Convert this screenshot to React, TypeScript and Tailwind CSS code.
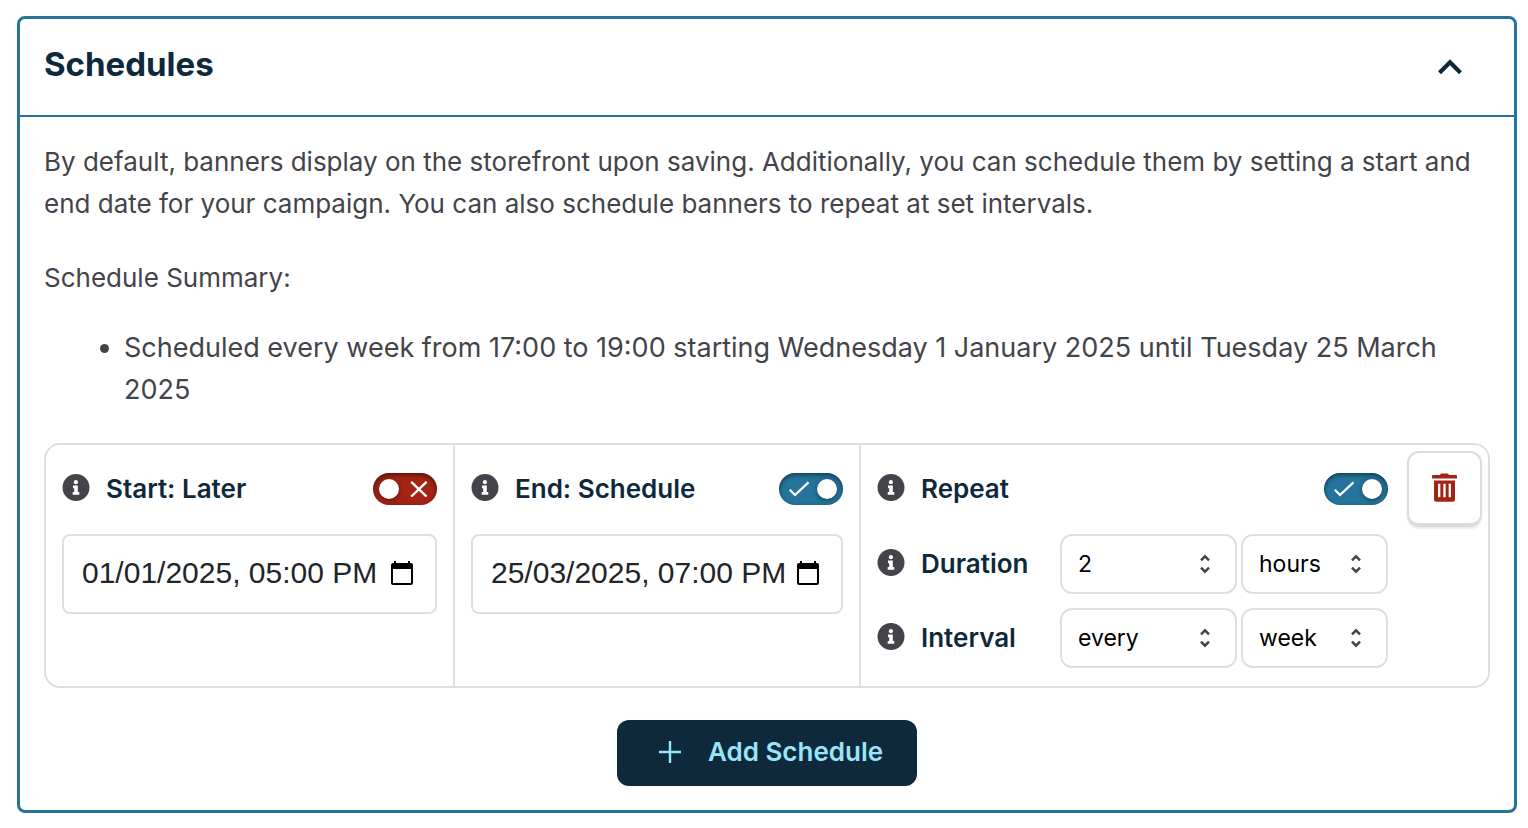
import * as React from "react";
import clsx from "clsx";

const LABEL = "text-[26px] leading-8 font-semibold text-[#0d293b]";

function InfoIcon() {
  return (
    <svg viewBox="0 0 28 28" className="mb-0.5 h-7 w-7 shrink-0" aria-hidden>
      <circle cx="14" cy="13.5" r="13.5" fill="#43444a" />
      <circle cx="13.9" cy="8.2" r="2.1" fill="#fff" />
      <path d="M11 11.4h4.800v6.600h1.500v2.800h-6.600v-2.800h1.500v-3.800H11z" fill="#fff" />
    </svg>
  );
}

function CalendarIcon() {
  return (
    <svg viewBox="0 0 22 24" className="h-6 w-[22px] shrink-0" aria-hidden>
      <path
        d="M20 2h-1V0h-2v2H5V0H3v2H2C.9 2 0 2.900 0 4v18c0 1.100.9 2 2 2h18c1.100 0 2-.9 2-2V4c0-1.100-.9-2-2-2zm0 20H2V8h18z"
        fill="#000"
      />
    </svg>
  );
}

function TrashIcon() {
  return (
    <svg viewBox="0 0 25 29" className="mb-0.5 h-[29px] w-[25px]" aria-hidden>
      <path d="M1 2h7L9 .5h7L17 2h7a1 1 0 0 1 1 1v2.500H0V3a1 1 0 0 1 1-1z" fill="#a32315" />
      <path d="M2 7.500h21v19a2.300 2.300 0 0 1-2.300 2.300H4.300A2.300 2.300 0 0 1 2 26.500z" fill="#a32315" />
      <path d="M7.200 10.800v13.400M12.500 10.800v13.400M17.800 10.800v13.400" stroke="#fff" strokeWidth="2.300" />
    </svg>
  );
}

function Toggle({ label, checked, onChange }: { label: string; checked: boolean; onChange: (v: boolean) => void }) {
  return (
    <label className="relative ml-auto block h-8 w-16 shrink-0 cursor-pointer">
      <input
        type="checkbox"
        aria-label={label}
        checked={checked}
        onChange={(e) => onChange(e.target.checked)}
        className="block h-8 w-16 cursor-pointer appearance-none rounded-full bg-[#a32315] shadow-[inset_0_2px_4px_rgba(0,0,0,0.5)] checked:bg-[#24749b]"
      />
      <span
        className={clsx(
          "pointer-events-none absolute top-[6px] h-5 w-5 rounded-full bg-white shadow-[0_1px_4px_rgba(0,0,0,0.5)]",
          checked ? "right-[6px]" : "left-[6px]",
        )}
      />
      <svg
        viewBox="0 0 20 16"
        className={clsx("pointer-events-none absolute top-2 h-4 w-5", checked ? "left-[10px]" : "right-2")}
        fill="none"
        stroke="#fff"
        strokeWidth="2.300"
        aria-hidden
      >
        {checked ? <path d="M.8 8.700l5.200 5.300L19.500 1.300" /> : <path d="M2.200.8l15.400 14.800M17.600.8L2.200 15.600" />}
      </svg>
    </label>
  );
}

function DateField({ id, value, onChange }: { id: string; value: string; onChange: (v: string) => void }) {
  return (
    <div className="flex h-20 items-center rounded-lg border-2 border-[#dce0e5] pr-[22px] pb-0.5 pl-[18px]">
      <input
        id={id}
        type="text"
        value={value}
        onChange={(e) => onChange(e.target.value)}
        className='min-w-0 flex-1 bg-transparent font-["Liberation_Sans",Arial,sans-serif] text-[30px] text-[#212529] outline-none'
      />
      <CalendarIcon />
    </div>
  );
}

function Select({ label, options, className }: { label: string; options: string[]; className: string }) {
  return (
    <div className={clsx("relative", className)}>
      <select
        aria-label={label}
        className="h-[60px] w-full appearance-none rounded-xl border-2 border-[#dce0e5] bg-white pr-10 pl-4 text-[23px] text-black"
      >
        {options.map((o) => (
          <option key={o}>{o}</option>
        ))}
      </select>
      <svg
        viewBox="0 0 10 20"
        className="pointer-events-none absolute top-5 right-[27px] h-5 w-[10px]"
        fill="none"
        stroke="#43444a"
        strokeWidth="2.500"
        aria-hidden
      >
        <path d="M1 6.300l4-4 4 4M1 13.700l4 4 4-4" />
      </svg>
    </div>
  );
}

export default function App() {
  const [open, setOpen] = React.useState(true);
  const [start, setStart] = React.useState("01/01/2025, 05:00 PM");
  const [end, setEnd] = React.useState("25/03/2025, 07:00 PM");
  const [startOn, setStartOn] = React.useState(false);
  const [endOn, setEndOn] = React.useState(true);
  const [repeatOn, setRepeatOn] = React.useState(true);

  return (
    <main className='min-h-screen bg-white pt-4 pr-[11px] pb-4 pl-[17px] font-["Inter","Liberation_Sans",sans-serif]'>
      <section className="rounded-lg border-3 border-[#24749b]">
        <header className="flex h-[98px] items-center justify-between border-b-2 border-[#24749b] pr-[52px] pl-6">
          <h2 className="pb-[6px] text-[33px] leading-10 font-bold text-[#0d293b]">Schedules</h2>
          <button type="button" aria-label="Toggle schedules" aria-expanded={open} onClick={() => setOpen(!open)}>
            <svg viewBox="0 0 24 18" className="h-[18px] w-6" fill="none" stroke="#0d293b" strokeWidth="4.200" aria-hidden>
              <path d="M1.500 14.800L12 4.300l10.500 10.500" />
            </svg>
          </button>
        </header>

        {open && (
          <div className="p-6 text-[26px] leading-[42px] text-[#43444a]">
            <p>
              By default, banners display on the storefront upon saving. Additionally, you can schedule them by setting a
              start and end date for your campaign. You can also schedule banners to repeat at set intervals.
            </p>
            <p className="mt-8">Schedule Summary:</p>
            <ul className="mt-7 list-disc pl-20 text-[27px]">
              <li>
                Scheduled every week from 17:00 to 19:00 starting Wednesday 1 January 2025 until Tuesday 25 March 2025
              </li>
            </ul>

            <div className="mt-8 grid grid-cols-[minmax(0,409fr)_minmax(0,406fr)_minmax(0,627fr)] rounded-2xl border-2 border-[#dce0e5]">
              <div className="border-r-2 border-[#dce0e5] px-4 pt-7">
                <div className="mb-[29px] flex h-8 items-center gap-4">
                  <InfoIcon />
                  <label htmlFor="start" className={LABEL}>
                    Start: Later
                  </label>
                  <Toggle label="Start later" checked={startOn} onChange={setStartOn} />
                </div>
                <DateField id="start" value={start} onChange={setStart} />
              </div>

              <div className="border-r-2 border-[#dce0e5] px-4 pt-7">
                <div className="mb-[29px] flex h-8 items-center gap-4">
                  <InfoIcon />
                  <label htmlFor="end" className={LABEL}>
                    End: Schedule
                  </label>
                  <Toggle label="Schedule end" checked={endOn} onChange={setEndOn} />
                </div>
                <DateField id="end" value={end} onChange={setEnd} />
              </div>

              <div className="flex pr-[6px] pl-4">
                <div className="flex-1 pt-7 pb-[18px]">
                  <div className="mb-[29px] flex h-8 items-center gap-4">
                    <InfoIcon />
                    <span className={LABEL}>Repeat</span>
                    <Toggle label="Repeat" checked={repeatOn} onChange={setRepeatOn} />
                  </div>
                  <div className="flex items-center">
                    <InfoIcon />
                    <span className={clsx(LABEL, "ml-4 flex-1")}>Duration</span>
                    <Select label="Duration" options={["2", "1", "3", "4"]} className="w-[177px]" />
                    <Select label="Duration unit" options={["hours", "days"]} className="ml-1 w-[147px]" />
                  </div>
                  <div className="mt-[14px] flex items-center">
                    <InfoIcon />
                    <span className={clsx(LABEL, "ml-4 flex-1")}>Interval</span>
                    <Select label="Interval" options={["every", "every other"]} className="w-[177px]" />
                    <Select label="Interval unit" options={["week", "day", "month"]} className="ml-1 w-[147px]" />
                  </div>
                </div>
                <button
                  type="button"
                  aria-label="Delete schedule"
                  className="mt-[6px] ml-[19px] flex h-[76px] w-[75px] shrink-0 items-center justify-center rounded-xl border-2 border-b-4 border-[#dcdcdc] shadow-[0_2px_2px_rgba(0,0,0,0.08)]"
                >
                  <TrashIcon />
                </button>
              </div>
            </div>

            <div className="mt-8 flex justify-center">
              <button
                type="button"
                className="flex h-[66px] w-[300px] items-center justify-center gap-[27px] rounded-xl bg-[#0d293b] pb-0.5 pl-2 font-semibold text-[#98e5fb]"
              >
                <svg viewBox="0 0 22 22" className="h-[22px] w-[22px]" stroke="#98e5fb" strokeWidth="2.400" aria-hidden>
                  <path d="M11 0v22M0 11h22" />
                </svg>
                Add Schedule
              </button>
            </div>
          </div>
        )}
      </section>
    </main>
  );
}
